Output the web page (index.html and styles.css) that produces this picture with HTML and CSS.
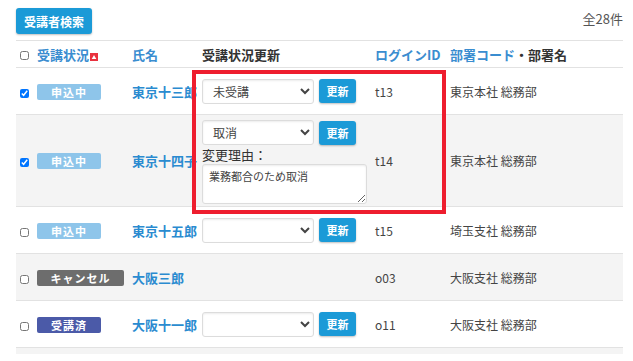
FILE: index.html
```html
<!DOCTYPE html>
<html lang="ja">
<head>
    <meta charset="UTF-8">
    <title>受講者一覧</title>
    <link rel="stylesheet" href="styles.css">
</head>
<body>
    <div class="page">
        <!-- 上部バー -->
        <div class="top-bar">
            <button class="btn btn-search">受講者検索</button>
            <div class="total">全28件</div>
        </div>

        <div class="table-wrap">
            <table class="list">
                <colgroup>
                    <col class="c-check">
                    <col class="c-status">
                    <col class="c-name">
                    <col class="c-update">
                    <col class="c-login">
                    <col class="c-dept">
                </colgroup>
                <thead>
                    <tr>
                        <th><input type="checkbox" class="chk"></th>
                        <th><a class="sort">受講状況</a><svg class="sort-icon" width="8" height="8" viewBox="0 0 8 8"><rect width="8" height="8" fill="#e9323f"/><path d="M4 2 L6.3 6 H1.7 Z" fill="#fff"/></svg></th>
                        <th><a class="sort">氏名</a></th>
                        <th>受講状況更新</th>
                        <th><a class="sort">ログインID</a></th>
                        <th><a class="sort">部署コード</a>・部署名</th>
                    </tr>
                </thead>
                <tbody>
                    <tr>
                        <td><input type="checkbox" class="chk" checked></td>
                        <td><span class="badge badge-apply">申込中</span></td>
                        <td><a class="name">東京十三郎</a></td>
                        <td>
                            <div class="update">
                                <select class="sel"><option>未受講</option></select>
                                <button class="btn btn-update">更新</button>
                            </div>
                        </td>
                        <td>t13</td>
                        <td>東京本社 総務部</td>
                    </tr>
                    <tr class="alt">
                        <td><input type="checkbox" class="chk" checked></td>
                        <td><span class="badge badge-apply">申込中</span></td>
                        <td><a class="name">東京十四子</a></td>
                        <td class="cell-reason">
                            <div class="update">
                                <select class="sel"><option>取消</option></select>
                                <button class="btn btn-update">更新</button>
                            </div>
                            <div class="reason-label">変更理由：</div>
                            <textarea class="reason">業務都合のため取消</textarea>
                        </td>
                        <td>t14</td>
                        <td>東京本社 総務部</td>
                    </tr>
                    <tr>
                        <td><input type="checkbox" class="chk"></td>
                        <td><span class="badge badge-apply">申込中</span></td>
                        <td><a class="name">東京十五郎</a></td>
                        <td>
                            <div class="update">
                                <select class="sel"><option></option></select>
                                <button class="btn btn-update">更新</button>
                            </div>
                        </td>
                        <td>t15</td>
                        <td>埼玉支社 総務部</td>
                    </tr>
                    <tr class="alt">
                        <td><input type="checkbox" class="chk"></td>
                        <td><span class="badge badge-cancel">キャンセル</span></td>
                        <td><a class="name">大阪三郎</a></td>
                        <td></td>
                        <td>o03</td>
                        <td>大阪支社 総務部</td>
                    </tr>
                    <tr>
                        <td><input type="checkbox" class="chk"></td>
                        <td><span class="badge badge-done">受講済</span></td>
                        <td><a class="name">大阪十一郎</a></td>
                        <td>
                            <div class="update">
                                <select class="sel"><option></option></select>
                                <button class="btn btn-update">更新</button>
                            </div>
                        </td>
                        <td>o11</td>
                        <td>大阪支社 総務部</td>
                    </tr>
                    <tr class="alt">
                        <td></td><td></td><td></td><td></td><td></td><td></td>
                    </tr>
                </tbody>
            </table>
        </div>

        <!-- 注目枠 -->
        <div class="highlight"></div>
    </div>
</body>
</html>
```

FILE: styles.css
```css
body {
    margin: 0;
    font-family: "Noto Sans CJK JP", "Noto Sans", sans-serif;
    font-size: 12px;
    color: #444;
    background: #fff;
}
.page {
    position: relative;
    padding: 8px 10px 0 16px;
}
/* 上部バー */
.top-bar {
    display: flex;
    justify-content: space-between;
    align-items: flex-start;
    margin-bottom: 6px;
}
.btn {
    font-family: inherit;
    border: none;
    border-radius: 3px;
    color: #fff;
    font-weight: bold;
    cursor: pointer;
    background-color: #1b9ad7;
    box-shadow: 0 1px 2px rgba(0, 0, 0, 0.25);
}
.btn-search {
    height: 26px;
    padding: 0 8px;
    font-size: 12px;
}
.total {
    font-size: 13px;
    color: #555;
    padding-top: 1px;
}
/* 一覧 */
.table-wrap {
    height: 314px;
    overflow: hidden;
}
.list {
    width: 607px;
    table-layout: fixed;
    border-collapse: collapse;
}
.c-check { width: 17px; }
.c-status { width: 95px; }
.c-name { width: 70px; }
.c-update { width: 173px; }
.c-login { width: 75px; }
.c-dept { width: 177px; }
.list th {
    text-align: left;
    font-size: 13px;
    font-weight: bold;
    color: #333;
    height: 26px;
    padding: 0 4px;
    border-top: 1px solid #e2e2e2;
    border-bottom: 1px solid #e2e2e2;
    white-space: nowrap;
}
.sort {
    color: #3a8dd0;
}
.sort-icon {
    margin-left: 1px;
    vertical-align: -1px;
}
.list td {
    height: 36px;
    padding: 5px 4px;
    border-bottom: 1px solid #e2e2e2;
    vertical-align: middle;
    white-space: nowrap;
}
.list tr.alt td {
    background-color: #f4f4f4;
}
.list td.cell-reason {
    padding: 5px 4px 2px;
}
.chk {
    width: 9px;
    height: 9px;
    margin: 0 0 0 0;
    vertical-align: middle;
}
.badge {
    display: inline-block;
    width: 64px;
    height: 16px;
    line-height: 16px;
    border-radius: 2px;
    text-align: center;
    color: #fff;
    font-size: 11px;
    font-weight: bold;
    letter-spacing: 1px;
}
.badge-apply { background-color: #8ec5ea; }
.badge-cancel { background-color: #6d6d6d; width: 87px; }
.badge-done { background-color: #4b5aa8; }
.name {
    color: #2a8bd0;
    font-weight: bold;
    font-size: 13px;
}
/* 受講状況更新 */
.update {
    display: flex;
    align-items: center;
    gap: 5px;
}
.sel {
    width: 112px;
    height: 25px;
    font-family: inherit;
    font-size: 12px;
    color: #444;
    padding: 0 6px;
    background-color: #fff;
    border: 1px solid #dcdcdc;
    border-radius: 3px;
    box-shadow: inset 0 1px 2px rgba(0, 0, 0, 0.08);
}
.btn-update {
    width: 37px;
    height: 24px;
    padding: 0;
    font-size: 11px;
}
.reason-label {
    font-size: 13px;
    color: #333;
    margin-top: 1px;
    line-height: 18px;
}
.reason {
    display: block;
    box-sizing: border-box;
    width: 165px;
    height: 40px;
    font-family: inherit;
    font-size: 11px;
    color: #444;
    padding: 3px 6px;
    border: 1px solid #dcdcdc;
    border-radius: 3px;
    background: #fff;
    box-shadow: inset 0 1px 2px rgba(0, 0, 0, 0.08);
}
/* 注目枠 */
.highlight {
    position: absolute;
    left: 192px;
    top: 70px;
    width: 246px;
    height: 136px;
    border: 4px solid #ee1d2e;
}
```
